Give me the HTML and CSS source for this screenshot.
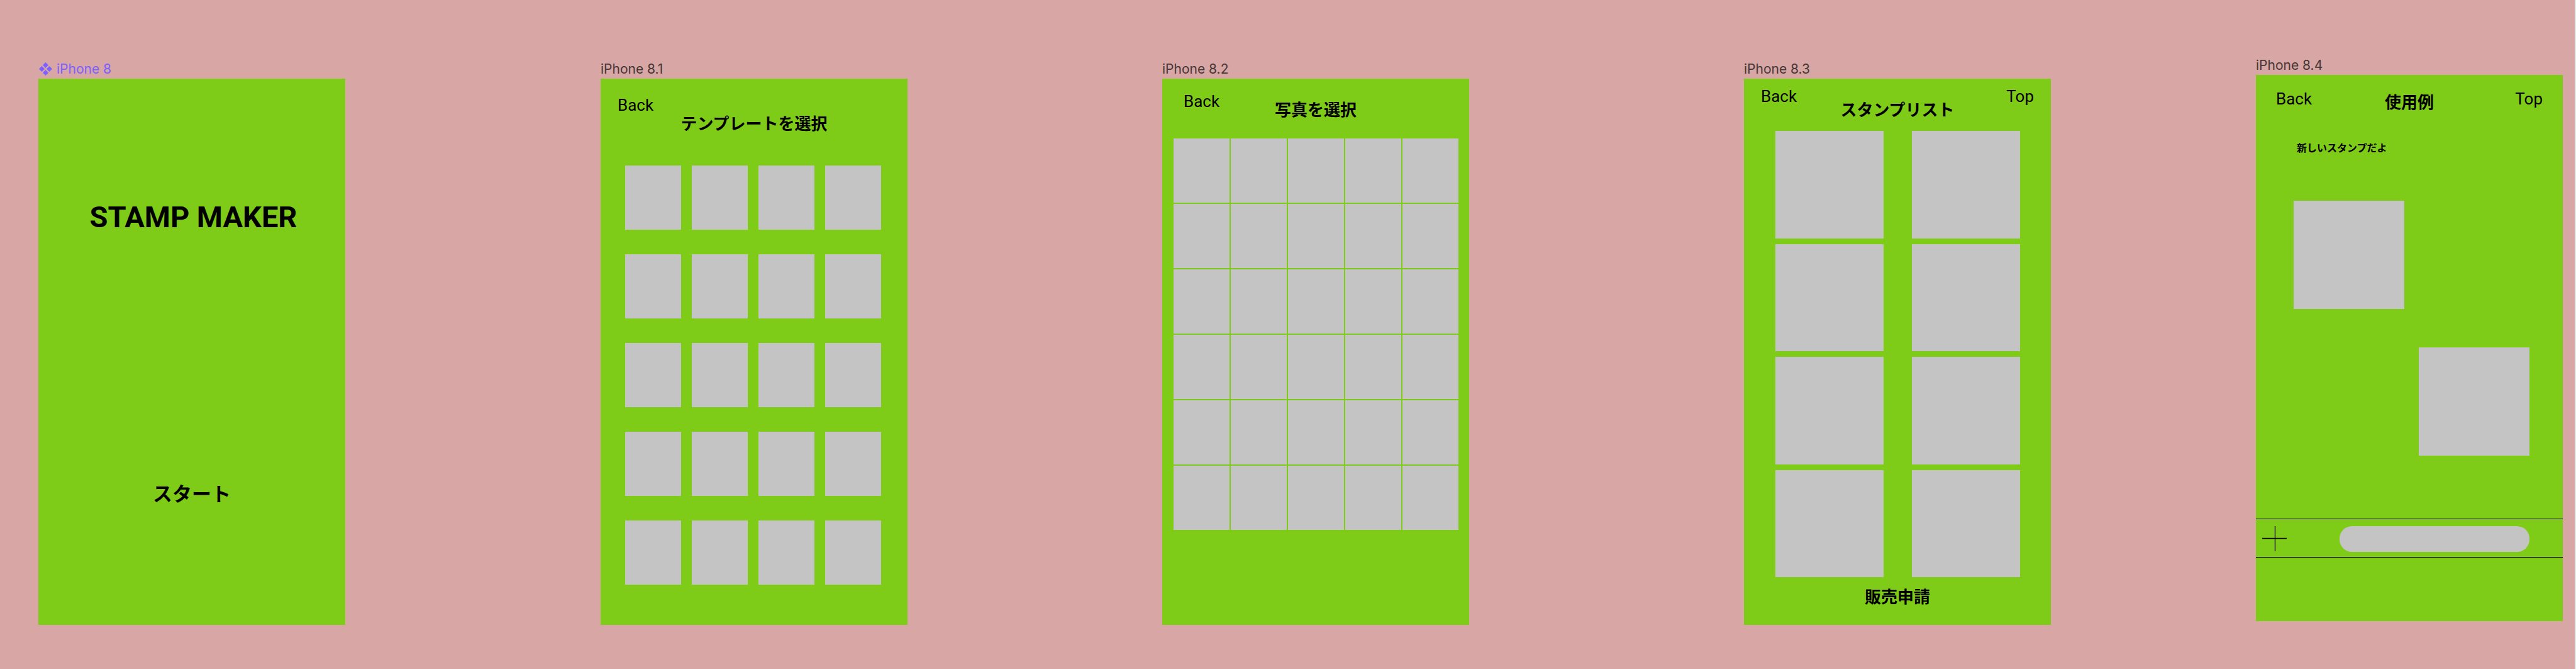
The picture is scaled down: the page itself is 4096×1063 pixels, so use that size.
FILE: index.html
```html
<!DOCTYPE html>
<html lang="ja">
<head>
<meta charset="utf-8">
<meta name="viewport" content="width=device-width, initial-scale=1">
<title>STAMP MAKER</title>
<link rel="stylesheet" href="styles.css">
</head>
<body>
<main class="canvas">

  <article class="frame">
    <p class="frame-label frame-label--component">
      <svg class="component-icon" viewBox="0 0 21 21" aria-hidden="true">
        <path d="M10.5 0 15 4.5 10.5 9 6 4.5ZM4.5 6 9 10.5 4.5 15 0 10.5ZM16.500 6 21 10.5 16.500 15 12 10.5ZM10.500 12 15 16.500 10.500 21 6 16.500Z"/>
      </svg>
      iPhone 8
    </p>
    <section class="screen screen--start">
      <h1 class="app-name">STAMP MAKER</h1>
      <button class="start-button" type="button">スタート</button>
    </section>
  </article>

  <article class="frame">
    <p class="frame-label">iPhone 8.1</p>
    <section class="screen">
      <header class="bar bar--template">
        <a class="nav-link" href="#">Back</a>
        <h2 class="title">テンプレートを選択</h2>
      </header>
      <div class="tiles tiles--template">
        <div class="tile"></div><div class="tile"></div><div class="tile"></div><div class="tile"></div>
        <div class="tile"></div><div class="tile"></div><div class="tile"></div><div class="tile"></div>
        <div class="tile"></div><div class="tile"></div><div class="tile"></div><div class="tile"></div>
        <div class="tile"></div><div class="tile"></div><div class="tile"></div><div class="tile"></div>
        <div class="tile"></div><div class="tile"></div><div class="tile"></div><div class="tile"></div>
      </div>
    </section>
  </article>

  <article class="frame">
    <p class="frame-label">iPhone 8.2</p>
    <section class="screen">
      <header class="bar bar--photo">
        <a class="nav-link" href="#">Back</a>
        <h2 class="title">写真を選択</h2>
      </header>
      <div class="tiles tiles--photo">
        <div class="tile"></div><div class="tile"></div><div class="tile"></div><div class="tile"></div><div class="tile"></div>
        <div class="tile"></div><div class="tile"></div><div class="tile"></div><div class="tile"></div><div class="tile"></div>
        <div class="tile"></div><div class="tile"></div><div class="tile"></div><div class="tile"></div><div class="tile"></div>
        <div class="tile"></div><div class="tile"></div><div class="tile"></div><div class="tile"></div><div class="tile"></div>
        <div class="tile"></div><div class="tile"></div><div class="tile"></div><div class="tile"></div><div class="tile"></div>
        <div class="tile"></div><div class="tile"></div><div class="tile"></div><div class="tile"></div><div class="tile"></div>
      </div>
    </section>
  </article>

  <article class="frame">
    <p class="frame-label">iPhone 8.3</p>
    <section class="screen">
      <header class="bar bar--list">
        <a class="nav-link" href="#">Back</a>
        <h2 class="title">スタンプリスト</h2>
        <a class="nav-link nav-link--end" href="#">Top</a>
      </header>
      <div class="tiles tiles--list">
        <div class="tile"></div><div class="tile"></div>
        <div class="tile"></div><div class="tile"></div>
        <div class="tile"></div><div class="tile"></div>
        <div class="tile"></div><div class="tile"></div>
      </div>
      <button class="apply-button" type="button">販売申請</button>
    </section>
  </article>

  <article class="frame frame--raised">
    <p class="frame-label">iPhone 8.4</p>
    <section class="screen">
      <header class="bar bar--example">
        <a class="nav-link" href="#">Back</a>
        <h2 class="title">使用例</h2>
        <a class="nav-link nav-link--end" href="#">Top</a>
      </header>
      <div class="chat">
        <p class="message">新しいスタンプだよ</p>
        <div class="stamp stamp--received"></div>
        <div class="stamp stamp--sent"></div>
      </div>
      <form class="composer">
        <button class="add-button" type="button" aria-label="追加">
          <svg class="add-icon" viewBox="0 0 39 40" aria-hidden="true"><path d="M20.500 0V40M0 19.500H39"/></svg>
        </button>
        <input class="message-input" type="text" aria-label="メッセージ">
      </form>
    </section>
  </article>

</main>
</body>
</html>
```
FILE: styles.css
```css
* {
  box-sizing: border-box;
}

body,
h1,
h2,
p {
  margin: 0;
}

body {
  background: #d8a6a4;
  color: #000;
  font-family: Roboto, "Noto Sans CJK JP", sans-serif;
}

button {
  padding: 0;
  border: 0;
  background: none;
  color: inherit;
  font: inherit;
  cursor: pointer;
}

/* Canvas: five artboards with free space between them */
.canvas {
  display: grid;
  grid-template-columns:
    61fr 488fr 406fr 488fr 405fr 488fr 437fr 488fr 326fr 488fr 19fr;
  align-items: start;
  min-height: 100vh;
  padding-top: 91px;
  border-right: 2px solid #e5e5e5;
}

.frame {
  margin-top: 6px;
  min-width: 0;
}

.frame--raised {
  margin-top: 0;
}

.frame:nth-child(1) { grid-column: 2; }
.frame:nth-child(2) { grid-column: 4; }
.frame:nth-child(3) { grid-column: 6; }
.frame:nth-child(4) { grid-column: 8; }
.frame:nth-child(5) { grid-column: 10; }

.frame:nth-child(n) { grid-row: 1; }

.frame-label {
  height: 28px;
  color: #463837;
  font: 21px/26px Inter, sans-serif;
}

.frame-label--component {
  display: flex;
  gap: 7px;
  padding-left: 1px;
  color: #7b61ff;
}

.component-icon {
  width: 21px;
  height: 21px;
  margin-top: 2px;
  fill: currentColor;
}

.screen {
  display: flex;
  flex-direction: column;
  aspect-ratio: 488 / 868;
  background: #7ecc18;
}

/* Start screen */
.screen--start {
  align-items: center;
  padding-top: 192px;
}

.app-name {
  padding-left: 5px;
  font-size: 47px;
  line-height: 56px;
  font-weight: 700;
}

.start-button {
  margin-top: 394px;
  font-size: 31px;
  line-height: 38px;
  font-weight: 700;
}

/* Screen header */
.bar {
  display: grid;
  grid-template-columns: 1fr auto 1fr;
  align-items: start;
}

.title,
.nav-link,
.apply-button {
  font-size: 26px;
  line-height: 30px;
}

.nav-link {
  color: inherit;
  text-decoration: none;
}

.nav-link--end {
  text-align: right;
}

.title,
.apply-button {
  font-weight: 700;
}

.bar--template { padding: 27px 27px 0; }
.bar--template .title { margin-top: 30px; }

.bar--photo { padding: 21px 34px 0; }
.bar--photo .title { margin-top: 14px; }

.bar--list { padding: 13px 27px 0; }
.bar--list .title { margin-top: 22px; }

.bar--example { padding: 23px 32px 0; }
.bar--example .title { margin-top: 6px; }

/* Tile grids */
.tiles {
  display: grid;
}

.tile {
  aspect-ratio: 89 / 102;
  background: #c4c4c4;
}

.tiles--template {
  grid-template-columns: repeat(4, 1fr);
  gap: 39px 17px;
  padding: 51px 42px 0 39px;
}

.tiles--photo {
  grid-template-columns: repeat(5, 1fr);
  gap: 2px;
  padding: 30px 17px 0 18px;
}

.tiles--list {
  grid-template-columns: repeat(2, 1fr);
  gap: 9px 45px;
  padding: 18px 49px 0 50px;
}

.tiles--list .tile {
  aspect-ratio: 344 / 341;
}

.apply-button {
  align-self: center;
  margin-top: 17px;
}

/* Chat example */
.chat {
  display: flex;
  flex-direction: column;
  padding: 48px 53px 0 60px;
}

.message {
  padding-left: 5px;
  font-size: 16px;
  line-height: 20px;
  font-weight: 700;
}

.stamp {
  width: 47%;
  aspect-ratio: 176 / 172;
  background: #c4c4c4;
}

.stamp--received {
  margin-top: 73px;
}

.stamp--sent {
  align-self: flex-end;
  margin-top: 61px;
}

.composer {
  display: flex;
  gap: 84px;
  margin-top: 100px;
  padding: 11px 53px 8px 10px;
  border: solid #000;
  border-width: 1px 0;
}

.add-button {
  display: flex;
}

.add-icon {
  width: 39px;
  height: 40px;
  fill: none;
  stroke: #000;
  stroke-width: 1.3;
}

.message-input {
  flex: 1;
  min-width: 0;
  height: 41px;
  padding: 0 20px;
  border: 0;
  border-radius: 20px;
  background: #c4c4c4;
  font: 16px/20px Roboto, "Noto Sans CJK JP", sans-serif;
}
```
